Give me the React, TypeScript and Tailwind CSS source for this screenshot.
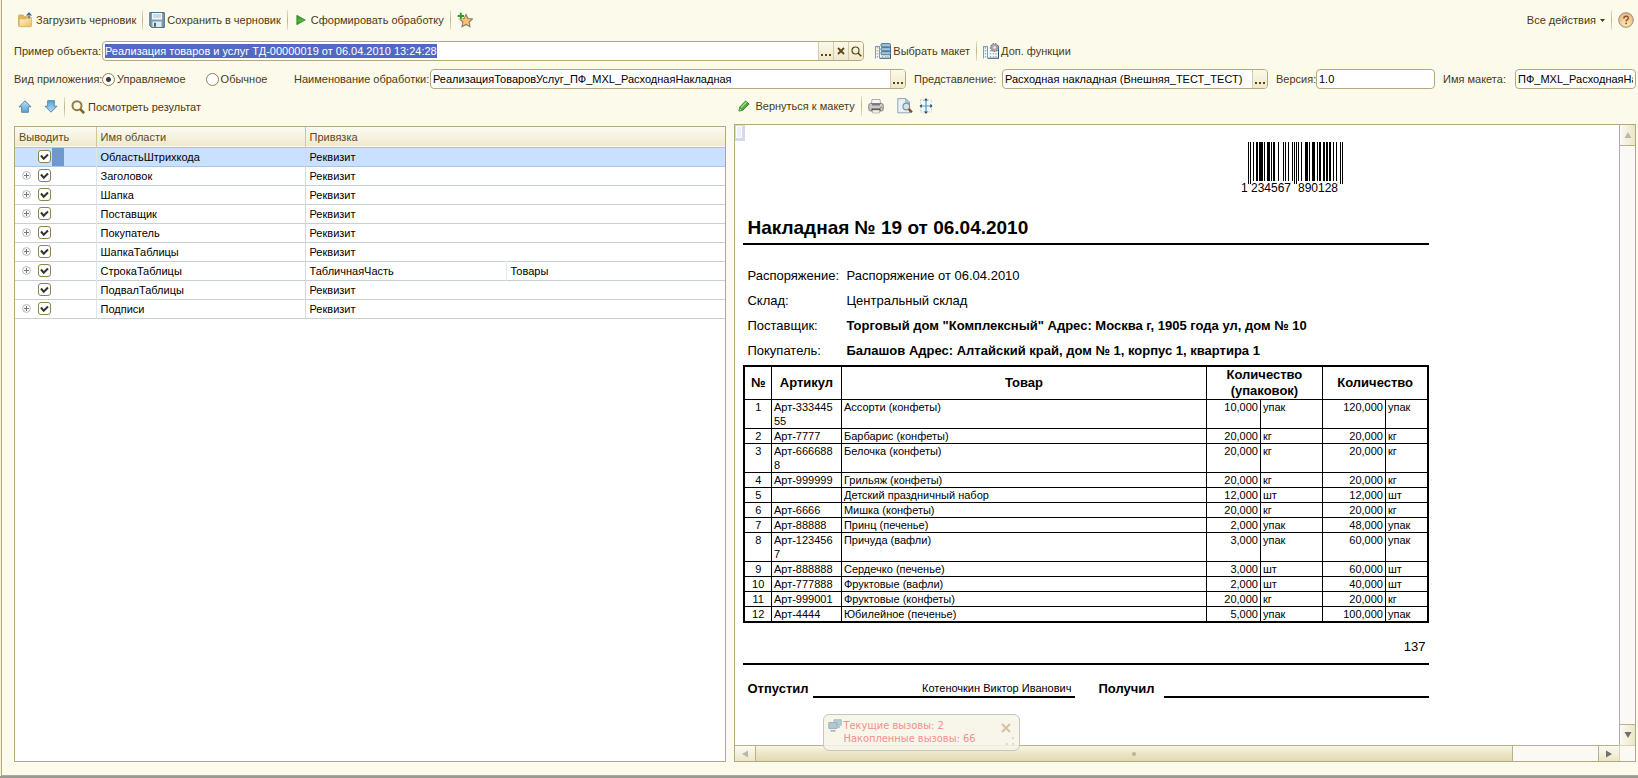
import { useEffect, useRef, type ReactNode } from "react";

type IconProps = { className?: string };

const FolderUpIcon = () => (
  <svg width="16" height="16" viewBox="0 0 16 16" aria-hidden="true">
    <defs>
      <linearGradient id="folder" x1="0" y1="0" x2="1" y2="1">
        <stop offset="0" stopColor="#fdf3c8" />
        <stop offset="1" stopColor="#ecc063" />
      </linearGradient>
    </defs>
    <path d="M.6 4q0-1 1-1h3.400l1.500 1.800h5.500q1 0 1 1v7.700q0 1-1 1H1.600q-1 0-1-1z" fill="#e3b65c" stroke="#cfa04c" strokeWidth=".8" />
    <path d="M1.300 7h6.500l1.200-1.200h4.400v8q0 .9-.9.900H2.200q-.9 0-.9-.9z" fill="url(#folder)" stroke="#d8aa52" strokeWidth=".6" />
    <path d="M11 6.500V1.500M8.600 3.600L11 1l2.400 2.600" fill="none" stroke="#3f6a8e" strokeWidth="1.200" />
  </svg>
);

const FloppyIcon = () => (
  <svg width="16" height="16" viewBox="0 0 16 16" aria-hidden="true">
    <path d="M.8.6h14.500v14.800H2.500L.8 13.700z" fill="#7f9db4" stroke="#44697f" strokeWidth="1" />
    <path d="M3 1h10v6.500H3z" fill="#f4f8fa" />
    <path d="M4 3h8M4 5h8" stroke="#a9bdca" strokeWidth="1" />
    <path d="M3.500 9.500h9v5.500h-9z" fill="#e3eaee" />
    <path d="M5 10.800h2v4H5z" fill="#44697f" />
  </svg>
);

const PlayIcon = () => (
  <svg width="15" height="12" viewBox="0 0 15 12" aria-hidden="true">
    <defs>
      <linearGradient id="play" x1="0" y1="0" x2="0" y2="1">
        <stop offset="0" stopColor="#2f8a2a" />
        <stop offset=".6" stopColor="#55b83c" />
        <stop offset="1" stopColor="#2a7d22" />
      </linearGradient>
    </defs>
    <path d="M2.800 1.300l8.600 4.700-8.600 4.700z" fill="url(#play)" stroke="#2e7f28" strokeWidth=".7" />
  </svg>
);

const StarPlusIcon = () => (
  <svg width="16" height="16" viewBox="0 0 16 16" aria-hidden="true">
    <path d="M9 2.500l1.900 4 4.500.5-3.300 3 .9 4.700-4-2.300-4 2.300.9-4.700-3.300-3 4.500-.5z" fill="#fbc36d" stroke="#8c7c68" strokeWidth="1.100" />
    <path d="M3.800.5v7M.3 4h7" stroke="#fcfaeb" strokeWidth="3" />
    <path d="M3.800.8v6.400M.6 4h6.400" stroke="#2f9b26" strokeWidth="1.900" />
  </svg>
);

const HelpIcon = () => (
  <svg width="16" height="16" viewBox="0 0 16 16" aria-hidden="true">
    <defs>
      <radialGradient id="help" cx=".5" cy=".8" r=".8">
        <stop offset="0" stopColor="#fdeab4" />
        <stop offset=".6" stopColor="#f5c58a" />
        <stop offset="1" stopColor="#e9b48a" />
      </radialGradient>
    </defs>
    <circle cx="8" cy="8" r="7.300" fill="url(#help)" stroke="#9b8a78" strokeWidth="1" />
    <path d="M5.800 6.400q0-2.200 2.300-2.200 2.200 0 2.200 1.900 0 1.100-1.200 1.800-1 .6-1 1.500" fill="none" stroke="#7a4a2c" strokeWidth="1.300" />
    <circle cx="8.100" cy="11.400" r=".9" fill="#7a4a2c" />
  </svg>
);

const TemplateGrid = () => (
  <>
    <path d="M.5 3.500h15v12H.5z" fill="#f6f8f9" />
    <path d="M.5 3v12.500M4.500 3v12.500" stroke="#7f9db3" strokeWidth="1" />
    <path d="M2.500 4v11M7.500 4v11M10.500 4v11M13 4v11" stroke="#9db3c3" strokeWidth="1.400" strokeDasharray="1.500 1.500" />
    <path d="M5 15.200h10.500v-12" fill="none" stroke="#2f5572" strokeWidth="1.100" />
    <path d="M.5 3.500h4" stroke="#7f9db3" />
  </>
);

const TemplateIcon = () => (
  <svg width="16" height="16" viewBox="0 0 16 16" aria-hidden="true">
    <TemplateGrid />
    {[0.6, 4.6, 8.6].map((y) => (
      <rect key={y} x="6" y={y} width="9.500" height="3.200" rx="1" fill="#a3c3d8" stroke="#3e6d8e" strokeWidth=".9" />
    ))}
  </svg>
);

const TemplateGearIcon = () => (
  <svg width="16" height="16" viewBox="0 0 16 16" aria-hidden="true">
    <TemplateGrid />
    <circle cx="11.500" cy="4.500" r="3.700" fill="#a3a3a8" stroke="#7d7d84" strokeWidth="1.500" strokeDasharray="1.500 1" />
    <circle cx="11.500" cy="4.500" r="3" fill="#a9a9ae" />
    <circle cx="11.500" cy="4.500" r="1.300" fill="#eceef0" />
  </svg>
);

const ArrowIcon = ({ className }: IconProps) => (
  <svg width="14" height="13" viewBox="0 0 14 13" className={className} aria-hidden="true">
    <defs>
      <linearGradient id="arrow" x1="0" y1="0" x2="0" y2="1">
        <stop offset="0" stopColor="#b7dcf3" />
        <stop offset="1" stopColor="#5ba4d8" />
      </linearGradient>
    </defs>
    <path d="M7 .8l6 6h-2.700v5.500H3.700V6.800H1z" fill="url(#arrow)" stroke="#4a7fa8" strokeWidth=".9" />
  </svg>
);

const SearchIcon = () => (
  <svg width="15" height="14" viewBox="0 0 15 14" aria-hidden="true">
    <circle cx="6" cy="5.700" r="4.500" fill="#fbf8e8" stroke="#8f7c48" strokeWidth="2" />
    <path d="M9.300 9.200l3.800 4" stroke="#7a662e" strokeWidth="2.600" />
  </svg>
);

const PencilIcon = () => (
  <svg width="15" height="12" viewBox="0 0 15 12" aria-hidden="true">
    <path d="M1 11l.8-4L7.500 1l3.600 3-6 6z" fill="#4fae3e" stroke="#2a7a22" strokeWidth=".9" />
    <path d="M3 7.500L8.500 2" stroke="#a6dc94" strokeWidth="1.200" />
    <path d="M1 11l.6-3 2.600 2.300z" fill="#e7efe0" stroke="#2a7a22" strokeWidth=".6" />
  </svg>
);

const PrinterIcon = () => (
  <svg width="16" height="16" viewBox="0 0 16 16" aria-hidden="true">
    <path d="M4 1.500h8l.8 5H3.200z" fill="#f7f7f6" stroke="#9c9ca0" strokeWidth=".8" />
    <rect x=".8" y="5.500" width="14.400" height="7.500" rx="1.800" fill="#cbc9c6" stroke="#77757a" strokeWidth=".9" />
    <path d="M4 5.500h8v2H4z" fill="#7a787a" />
    <path d="M3.500 10.500h9v2.500h-9z" fill="#4a4444" />
    <path d="M4.500 12h7v3h-7z" fill="#f6efe8" stroke="#9c9a9a" strokeWidth=".6" />
    <path d="M12 9.500h2" stroke="#e0703a" strokeWidth="1.200" />
  </svg>
);

const PreviewIcon = () => (
  <svg width="16" height="16" viewBox="0 0 16 16" aria-hidden="true">
    <path d="M.8.600h8l3.700 3.700v10.500H.8z" fill="#e9f1f7" stroke="#7d9db8" strokeWidth=".9" />
    <path d="M8.800.600v3.700h3.700z" fill="#bcd2e2" stroke="#7d9db8" strokeWidth=".7" />
    <circle cx="9.300" cy="8.500" r="3.300" fill="#cfe4f2" stroke="#8d8d95" strokeWidth="1.200" />
    <path d="M11.800 11l3 3.300" stroke="#8a4b2c" strokeWidth="2.500" />
  </svg>
);

const CrossIcon = () => (
  <svg width="14" height="16" viewBox="0 0 14 16" aria-hidden="true">
    <path d="M1.500 2h11v12h-11z" fill="#f6f8f8" stroke="#aebcc5" strokeDasharray="1 1.500" />
    <path d="M7 1v14M1 8h12" stroke="#4f94c4" strokeWidth="1.200" />
    <path d="M7 0L5 2.600h4zM7 16l-2-2.600h4zM.5 8l2.300-1.900v3.800zM13.500 8l-2.300-1.900v3.800z" fill="#24506f" />
  </svg>
);

const ComputersIcon = () => (
  <svg width="14" height="13" viewBox="0 0 14 13" aria-hidden="true" className="opacity-60">
    <path d="M6 .8h7.200v5.400H6z" fill="#8db4cf" stroke="#7690a3" />
    <path d="M8 8h4" stroke="#7690a3" strokeWidth="1.500" />
    <path d="M.8 3.500H9v6H.8z" fill="#7ca8c6" stroke="#6d8699" />
    <path d="M2.500 11.800h5" stroke="#6d8699" strokeWidth="1.600" />
  </svg>
);

/* EAN-13 bar pattern, one unit per module. */
const L = ["0001101", "0011001", "0010011", "0111101", "0100011", "0110001", "0101111", "0111011", "0110111", "0001011"];
const PARITY = ["LLLLLL", "LLGLGG", "LLGGLG", "LLGGGL", "LGLLGG", "LGGLLG", "LGGGLL", "LGLGLG", "LGLGGL", "LGGLGL"];
const invert = (s: string) => [...s].map((c) => (c === "1" ? "0" : "1")).join("");
const mirror = (s: string) => [...s].reverse().join("");

function encode(code: string) {
  const parity = PARITY[Number(code[0])];
  const left = [...code.slice(1, 7)].map((d, i) => (parity[i] === "L" ? L[+d] : mirror(invert(L[+d])))).join("");
  const right = [...code.slice(7)].map((d) => invert(L[+d])).join("");
  return "101" + left + "01010" + right + "101";
}

function Barcode({ code }: { code: string }) {
  const bits = encode(code);
  return (
    <svg width="104" height="52" viewBox="0 0 104 52" shapeRendering="crispEdges" role="img" aria-label={code}>
      {[...bits].map((bit, i) => {
        const guard = i < 3 || i > 91 || (i > 44 && i < 50);
        return bit === "1" ? <rect key={i} x={8 + i} y="0" width="1" height={guard ? 42 : 39} fill="#000" /> : null;
      })}
      <g fontFamily="Liberation Sans, Arial, sans-serif" fontSize="12">
        <text x="1" y="50">{code[0]}</text>
        <text x="11" y="50">{code.slice(1, 7)}</text>
        <text x="58" y="50">{code.slice(7)}</text>
      </g>
    </svg>
  );
}

const Separator = () => <span className="h-5 w-px bg-linear-to-b from-[#e8e2c4] via-[#bdb48a] to-[#e8e2c4]" />;

function ToolButton({ children, label }: { children?: ReactNode; label: string }) {
  return (
    <button type="button" className="flex items-center gap-0.5 whitespace-nowrap">
      {children}
      <span>{label}</span>
    </button>
  );
}

function IconButton({ children, label }: { children: ReactNode; label: string }) {
  return (
    <button type="button" aria-label={label} className="flex items-center">
      {children}
    </button>
  );
}

const fieldBox = "flex h-5 min-w-0 overflow-hidden rounded-sm border border-[#b3a97d] bg-white text-black";
const fieldInput = "min-w-0 flex-1 bg-transparent px-0.5 text-[11px] leading-[14px] outline-none selection:bg-[#5268c4] selection:text-white";
const fieldButton = "flex w-[15px] shrink-0 items-center justify-center border-l border-[#d5cda8] bg-linear-to-b from-[#fbf9ea] to-[#eee8cb]";

function Ellipsis() {
  return (
    <button type="button" aria-label="Выбрать" className={fieldButton}>
      <svg width="11" height="12" viewBox="0 0 11 12" aria-hidden="true">
        <path d="M0 9h2v2H0zM4 9h2v2H4zM8 9h2v2H8z" fill="#5a4712" />
      </svg>
    </button>
  );
}

function Radio({ label, checked }: { label: string; checked?: boolean }) {
  return (
    <label className="flex items-center gap-0.5">
      <input
        type="radio"
        name="app-kind"
        defaultChecked={checked}
        className="size-[13px] appearance-none rounded-full border border-[#8d8251] bg-white checked:bg-[radial-gradient(circle,#3a3a3a_0_2px,#ffffff_3px)]"
      />
      {label}
    </label>
  );
}

type Area = { name: string; binding: string; source?: string; expandable?: boolean };
const areas: Area[] = [
  { name: "ОбластьШтрихкода", binding: "Реквизит" },
  { name: "Заголовок", binding: "Реквизит", expandable: true },
  { name: "Шапка", binding: "Реквизит", expandable: true },
  { name: "Поставщик", binding: "Реквизит", expandable: true },
  { name: "Покупатель", binding: "Реквизит", expandable: true },
  { name: "ШапкаТаблицы", binding: "Реквизит", expandable: true },
  { name: "СтрокаТаблицы", binding: "ТабличнаяЧасть", source: "Товары", expandable: true },
  { name: "ПодвалТаблицы", binding: "Реквизит" },
  { name: "Подписи", binding: "Реквизит", expandable: true },
];

function AreasTable() {
  return (
    <div className="min-w-0 border border-[#b3a97d] bg-white">
      <table className="w-full table-fixed border-collapse text-left text-black">
        <colgroup>
          <col className="w-[81px]" />
          <col className="w-[209px]" />
          <col className="w-[201px]" />
          <col />
        </colgroup>
        <thead>
          <tr className="h-[20px] border-b border-[#c9c09a] bg-linear-to-b from-[#fcfbf2] to-[#efe9cd] text-[#5e4a1a]">
            <th className="border-r border-[#cfc7a3] px-1 font-normal">Выводить</th>
            <th className="border-r border-[#cfc7a3] px-1 font-normal">Имя области</th>
            <th colSpan={2} className="px-1 font-normal">Привязка</th>
          </tr>
        </thead>
        <tbody>
          {areas.map((a, i) => (
            <tr key={a.name} className={i === 0 ? "h-[19px] border-b border-[#a9c6e6] bg-[#c9e1ff]" : "h-[19px] border-b border-[#c8d0d4]"}>
              <td className="border-r border-[#dfe4e6] p-0">
                <div className="flex h-[18px] items-center">
                  <span className="flex w-[23px] justify-end pr-[7px]">
                    {a.expandable && (
                      <button type="button" aria-label={"Развернуть " + a.name} className="flex">
                        <svg width="9" height="9" viewBox="0 0 9 9" aria-hidden="true">
                          <circle cx="4.500" cy="4.500" r="3.900" fill="#fff" stroke="#b5b5b5" />
                          <path d="M4.500 2v5M2 4.500h5" stroke="#777" />
                        </svg>
                      </button>
                    )}
                  </span>
                  <label className="grid">
                    <input
                      type="checkbox"
                      defaultChecked
                      aria-label={a.name}
                      className="peer col-start-1 row-start-1 size-[13px] appearance-none rounded-[3px] border border-[#8d8251] bg-white"
                    />
                    <svg width="13" height="13" viewBox="0 0 13 13" aria-hidden="true" className="pointer-events-none invisible col-start-1 row-start-1 peer-checked:visible">
                      <path d="M3 5.500l2.700 3.200 4.300-4.200" fill="none" stroke="#333" strokeWidth="2" />
                    </svg>
                  </label>
                  {i === 0 && <span className="ml-px h-[18px] w-3 bg-[#7098cf]" />}
                </div>
              </td>
              <td className="border-r border-[#d3d9dc] px-1 pt-px pb-0">{a.name}</td>
              <td colSpan={a.source ? 1 : 2} className="px-1 pt-px pb-0">{a.binding}</td>
              {a.source && <td className="border-l border-[#e6e9ea] px-1 pt-px pb-0">{a.source}</td>}
            </tr>
          ))}
        </tbody>
      </table>
    </div>
  );
}

type Line = [article: string, name: string, packs: string, packUnit: string, qty: string, unit: string];
const lines: Line[] = [
  ["Арт-33344555", "Ассорти (конфеты)", "10,000", "упак", "120,000", "упак"],
  ["Арт-7777", "Барбарис (конфеты)", "20,000", "кг", "20,000", "кг"],
  ["Арт-6666888", "Белочка (конфеты)", "20,000", "кг", "20,000", "кг"],
  ["Арт-999999", "Грильяж (конфеты)", "20,000", "кг", "20,000", "кг"],
  ["", "Детский праздничный набор", "12,000", "шт", "12,000", "шт"],
  ["Арт-6666", "Мишка (конфеты)", "20,000", "кг", "20,000", "кг"],
  ["Арт-88888", "Принц (печенье)", "2,000", "упак", "48,000", "упак"],
  ["Арт-1234567", "Причуда (вафли)", "3,000", "упак", "60,000", "упак"],
  ["Арт-888888", "Сердечко (печенье)", "3,000", "шт", "60,000", "шт"],
  ["Арт-777888", "Фруктовые (вафли)", "2,000", "шт", "40,000", "шт"],
  ["Арт-999001", "Фруктовые (конфеты)", "20,000", "кг", "20,000", "кг"],
  ["Арт-4444", "Юбилейное (печенье)", "5,000", "упак", "100,000", "упак"],
];

const cell = "border border-black px-0.5 py-0 align-top";

function Invoice() {
  return (
    <article className="w-[694px] pl-2 text-[13px] text-black">
      <div className="flex justify-end pt-[17px] pr-[85px]">
        <Barcode code="1234567890128" />
      </div>
      <h1 className="mt-[22px] border-b-2 border-black pb-[3px] pl-1 text-[19px] leading-6 font-bold">Накладная № 19 от 06.04.2010</h1>
      <dl className="mt-[18px] grid grid-cols-[99px_1fr] pl-1 leading-[25px]">
        <dt>Распоряжение:</dt>
        <dd>Распоряжение от 06.04.2010</dd>
        <dt>Склад:</dt>
        <dd>Центральный склад</dd>
        <dt>Поставщик:</dt>
        <dd className="font-bold">Торговый дом "Комплексный" Адрес: Москва г, 1905 года ул, дом № 10</dd>
        <dt>Покупатель:</dt>
        <dd className="font-bold">Балашов Адрес: Алтайский край, дом № 1, корпус 1, квартира 1</dd>
      </dl>
      <table className="mt-0.5 w-full table-fixed border-collapse border-2 border-black text-[11px] leading-[14px]">
        <colgroup>
          <col className="w-[27px]" />
          <col className="w-[70px]" />
          <col />
          <col className="w-[54px]" />
          <col className="w-[62px]" />
          <col className="w-[63px]" />
          <col className="w-[43px]" />
        </colgroup>
        <thead className="text-[13px] leading-4">
          <tr>
            <th className="border border-black p-0">№</th>
            <th className="border border-black p-0">Артикул</th>
            <th className="border border-black p-0">Товар</th>
            <th colSpan={2} className="border border-black px-2 py-0">Количество (упаковок)</th>
            <th colSpan={2} className="border border-black p-0">Количество</th>
          </tr>
        </thead>
        <tbody>
          {lines.map(([article, name, packs, packUnit, qty, unit], i) => (
            <tr key={name}>
              <td className={cell + " text-center"}>{i + 1}</td>
              <td className="border border-black py-0 pr-1.5 pl-0.5 align-top break-all">{article}</td>
              <td className={cell}>{name}</td>
              <td className={cell + " text-right"}>{packs}</td>
              <td className={cell}>{packUnit}</td>
              <td className={cell + " text-right"}>{qty}</td>
              <td className={cell}>{unit}</td>
            </tr>
          ))}
        </tbody>
      </table>
      <p className="border-b-2 border-black pt-4 pr-1 pb-2 text-right leading-4">137</p>
      <div className="mt-[15px] flex items-end leading-4">
        <b className="w-[70px] pb-px pl-1">Отпустил</b>
        <span className="w-[262px] border-b-2 border-black pr-1 text-right text-[11px] leading-4">Котеночкин Виктор Иванович</span>
        <b className="ml-[23px] w-[66px] pb-px">Получил</b>
        <span className="flex-1 border-b-2 border-black" />
      </div>
    </article>
  );
}

function ScrollArrow({ label, d, dim, className }: { label: string; d: string; dim?: boolean; className: string }) {
  return (
    <button type="button" aria-label={label} className={"flex shrink-0 items-center justify-center border-[#b9b18a] from-[#fbfaf0] to-[#ece6c8] " + className}>
      <svg width="8" height="8" viewBox="0 0 8 8" aria-hidden="true">
        <path d={d} fill={dim ? "#bab8ac" : "#6f6f6c"} />
      </svg>
    </button>
  );
}

function CallsNotice() {
  return (
    <div className="absolute bottom-2.5 left-[88px] flex h-[37px] w-[197px] items-start rounded-md border border-[#c4c6c2] bg-[#f7f4e6]/85 px-1 pt-1 text-[#f98d8d]">
      <ComputersIcon />
      <p className="ml-px flex-1 font-['DejaVu_Sans_Condensed','Noto_Sans',sans-serif] text-[11px] leading-[13px] whitespace-nowrap">
        Текущие вызовы: 2<br />Накопленные вызовы: 66
      </p>
      <div className="flex flex-col items-end gap-1 pt-1">
        <button type="button" aria-label="Закрыть" className="mr-1 flex">
          <svg width="10" height="10" viewBox="0 0 10 10" aria-hidden="true">
            <path d="M1 1l8 8M9 1l-8 8" stroke="#d3c4a4" strokeWidth="2.200" />
          </svg>
        </button>
        <svg width="10" height="10" viewBox="0 0 10 10" aria-hidden="true">
          <path d="M7 0h2v2H7zM7 6h2v2H7zM1 6h2v2H1z" fill="#dedac8" />
        </svg>
      </div>
    </div>
  );
}

export default function App() {
  const sample = useRef<HTMLInputElement>(null);
  useEffect(() => {
    sample.current?.focus();
    sample.current?.setSelectionRange(0, sample.current.value.length);
  }, []);

  return (
    <main className="flex min-h-screen flex-col border-b-2 border-[#9a9a94] bg-[#f4f0dc] pl-px font-['Liberation_Sans',Arial,sans-serif] text-[11px] leading-[14px] text-[#4a3a10]">
      <div className="flex flex-1 flex-col border-b border-l border-[#b3a97d] bg-[#fcfaeb] pr-0.5 pb-[13px] pl-3">
        <div className="mt-2 flex h-6 items-center justify-between pr-0.5 pl-1">
          <div className="flex items-center gap-1.5">
            <ToolButton label="Загрузить черновик"><FolderUpIcon /></ToolButton>
            <Separator />
            <ToolButton label="Сохранить в черновик"><FloppyIcon /></ToolButton>
            <Separator />
            <ToolButton label="Сформировать обработку"><PlayIcon /></ToolButton>
            <Separator />
            <IconButton label="Добавить в избранное"><StarPlusIcon /></IconButton>
          </div>
          <div className="flex items-center gap-1.5">
            <button type="button" className="flex items-center gap-1">
              Все действия
              <svg width="5" height="3" viewBox="0 0 5 3" aria-hidden="true"><path d="M0 0h5L2.500 3z" fill="#4a3a10" /></svg>
            </button>
            <Separator />
            <IconButton label="Справка"><HelpIcon /></IconButton>
          </div>
        </div>

        <div className="mt-[9px] flex h-5 items-center">
          <label htmlFor="sample" className="w-[88px] whitespace-nowrap">Пример объекта:</label>
          <div className={fieldBox + " w-[47%]"}>
            <input id="sample" ref={sample} className={fieldInput} defaultValue="Реализация товаров и услуг ТД-00000019 от 06.04.2010 13:24:28" />
            <Ellipsis />
            <button type="button" aria-label="Очистить" className={fieldButton}>
              <svg width="8" height="8" viewBox="0 0 8 8" aria-hidden="true"><path d="M1 1l6 6M7 1L1 7" stroke="#5a4712" strokeWidth="1.800" /></svg>
            </button>
            <button type="button" aria-label="Открыть" className={fieldButton}>
              <svg width="11" height="11" viewBox="0 0 11 11" aria-hidden="true"><circle cx="4.500" cy="4.500" r="3.500" fill="none" stroke="#5a4712" strokeWidth="1.200" /><path d="M7 7l3.300 3.300" stroke="#5a4712" strokeWidth="1.600" /></svg>
            </button>
          </div>
          <div className="ml-[11px] flex items-center gap-1.5">
            <ToolButton label="Выбрать макет"><TemplateIcon /></ToolButton>
            <Separator />
            <ToolButton label="Доп. функции"><TemplateGearIcon /></ToolButton>
          </div>
        </div>

        <div className="mt-2 grid h-5 grid-cols-[280px_136px_476fr_96px_266fr_48px_119fr_80px_121fr] items-center whitespace-nowrap">
          <div role="radiogroup" aria-label="Вид приложения" className="flex items-center">
            <span className="w-[88px]">Вид приложения:</span>
            <Radio label="Управляемое" checked />
            <span className="w-5" />
            <Radio label="Обычное" />
          </div>
          <label htmlFor="processing">Наименование обработки:</label>
          <div className={fieldBox}>
            <input id="processing" className={fieldInput} defaultValue="РеализацияТоваровУслуг_ПФ_MXL_РасходнаяНакладная" />
            <Ellipsis />
          </div>
          <label htmlFor="view" className="pl-2">Представление:</label>
          <div className={fieldBox}>
            <input id="view" className={fieldInput} defaultValue="Расходная накладная (Внешняя_ТЕСТ_ТЕСТ)" />
            <Ellipsis />
          </div>
          <label htmlFor="version" className="pl-2">Версия:</label>
          <div className={fieldBox}>
            <input id="version" className={fieldInput} defaultValue="1.0" />
          </div>
          <label htmlFor="template" className="pl-2">Имя макета:</label>
          <div className={fieldBox}>
            <input id="template" className={fieldInput} defaultValue="ПФ_MXL_РасходнаяНакладная" />
          </div>
        </div>

        <div className="mt-[5px] grid flex-1 grid-cols-[712fr_901fr] gap-2">
          <section className="flex min-w-0 flex-col">
            <div className="mb-[7px] flex h-[25px] items-center gap-1.5 pl-1">
              <IconButton label="Вверх"><ArrowIcon /></IconButton>
              <span className="w-0" />
              <IconButton label="Вниз"><ArrowIcon className="rotate-180" /></IconButton>
              <Separator />
              <ToolButton label="Посмотреть результат"><SearchIcon /></ToolButton>
            </div>
            <div className="grid flex-1">
              <AreasTable />
            </div>
          </section>

          <section className="flex min-w-0 flex-col">
            <div className="mb-1.5 flex h-6 items-center gap-1.5 pl-1">
              <ToolButton label="Вернуться к макету"><PencilIcon /></ToolButton>
              <Separator />
              <IconButton label="Печать"><PrinterIcon /></IconButton>
              <span className="w-px" />
              <IconButton label="Предварительный просмотр"><PreviewIcon /></IconButton>
              <IconButton label="Параметры страницы"><CrossIcon /></IconButton>
            </div>
            <div className="relative grid flex-1 grid-cols-[1fr_16px] grid-rows-[1fr_16px] border border-[#b3a97d] bg-white">
              <div className="relative min-w-0 overflow-hidden">
                <span className="absolute top-0 left-0 h-4 w-2.5 border border-r-[3px] border-b-[3px] border-[#d3d9ee] bg-[#eceffa] shadow-[inset_0_0_0_1px_#ffffff]" />
                <Invoice />
              </div>
              <div className="flex flex-col justify-between border-l border-[#b9b18a] bg-[#faf9f4]">
                <ScrollArrow label="Прокрутить вверх" d="M4 1l3.500 6h-7z" dim className="h-[21px] border-b bg-linear-to-r" />
                <ScrollArrow label="Прокрутить вниз" d="M4 7L.5 1h7z" className="h-[21px] border-t bg-linear-to-r" />
              </div>
              <div className="flex border-t border-[#b9b18a] bg-[#faf9f4]">
                <ScrollArrow label="Прокрутить влево" d="M1 4l6-3.500v7z" dim className="w-[21px] border-r bg-linear-to-b" />
                <div className="flex flex-[758] items-center justify-center border-r border-[#b9b18a] bg-linear-to-b from-[#f8f5e4] via-[#ece6c6] to-[#e0d9b2]">
                  <span className="size-1 rounded-full bg-[#bdb58f]" />
                </div>
                <div className="flex-[85]" />
                <ScrollArrow label="Прокрутить вправо" d="M7 4L1 .5v7z" className="w-[21px] border-l bg-linear-to-b" />
              </div>
              <div className="border-t border-l border-[#d8d2b4] bg-[#faf9f4]" />
              <CallsNotice />
            </div>
          </section>
        </div>
      </div>
    </main>
  );
}
